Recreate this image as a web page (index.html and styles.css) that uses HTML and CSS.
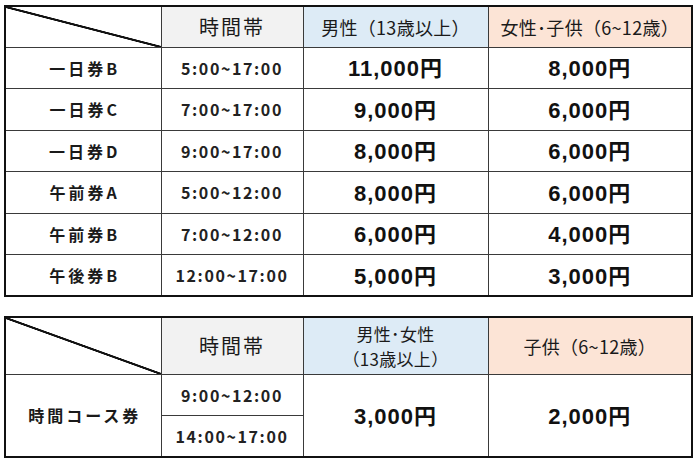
FILE: index.html
```html
<!DOCTYPE html>
<html lang="ja">
<head>
<meta charset="utf-8">
<link rel="stylesheet" href="styles.css">
</head>
<body>
<div class="page">
  <table class="price">
    <colgroup><col class="c1"><col class="c2"><col class="c3"><col class="c4"></colgroup>
    <tr class="head">
      <th class="diag"></th>
      <th class="h-time">時間帯</th>
      <th class="h-blue">男性（13歳以上）</th>
      <th class="h-peach">女性･子供（6~12歳）</th>
    </tr>
    <tr><td class="label">一日券B</td><td class="time">5:00~17:00</td><td class="yen">11,000<span class="en">円</span></td><td class="yen">8,000<span class="en">円</span></td></tr>
    <tr><td class="label">一日券C</td><td class="time">7:00~17:00</td><td class="yen">9,000<span class="en">円</span></td><td class="yen">6,000<span class="en">円</span></td></tr>
    <tr><td class="label">一日券D</td><td class="time">9:00~17:00</td><td class="yen">8,000<span class="en">円</span></td><td class="yen">6,000<span class="en">円</span></td></tr>
    <tr><td class="label">午前券A</td><td class="time">5:00~12:00</td><td class="yen">8,000<span class="en">円</span></td><td class="yen">6,000<span class="en">円</span></td></tr>
    <tr><td class="label">午前券B</td><td class="time">7:00~12:00</td><td class="yen">6,000<span class="en">円</span></td><td class="yen">4,000<span class="en">円</span></td></tr>
    <tr><td class="label">午後券B</td><td class="time">12:00~17:00</td><td class="yen">5,000<span class="en">円</span></td><td class="yen">3,000<span class="en">円</span></td></tr>
  </table>

  <table class="price second">
    <colgroup><col class="c1"><col class="c2"><col class="c3"><col class="c4"></colgroup>
    <tr class="head2">
      <th class="diag"></th>
      <th class="h-time">時間帯</th>
      <th class="h-blue two"><div class="ln">男性･女性</div><div class="ln">（13歳以上）</div></th>
      <th class="h-peach">子供（6~12歳）</th>
    </tr>
    <tr class="r2"><td class="label" rowspan="2">時間コース券</td><td class="time">9:00~12:00</td><td class="yen" rowspan="2">3,000<span class="en">円</span></td><td class="yen" rowspan="2">2,000<span class="en">円</span></td></tr>
    <tr class="r2"><td class="time">14:00~17:00</td></tr>
  </table>
</div>
</body>
</html>
```
FILE: styles.css
```css
html, body {
  margin: 0;
  padding: 0;
  background: #ffffff;
}

.page {
  padding: 5px 0 0 4px;
  display: flex;
  flex-direction: column;
  gap: 19px;
  font-family: "Noto Sans CJK JP", "Liberation Sans", sans-serif;
  color: #1a1a1a;
}

.price {
  border-collapse: collapse;
  table-layout: fixed;
  width: 687px;
  border: 2px solid #111;
}

.c1 { width: 156px; }
.c2 { width: 142px; }
.c3 { width: 185px; }
.c4 { width: 204px; }

.price th,
.price td {
  border: 1px solid #3a3a3a;
  padding: 0;
  text-align: center;
  vertical-align: middle;
  line-height: 24px;
}

.price tr { height: 41.5px; }
.price tr.head { height: 41px; }
.price tr.head2 { height: 57px; }
.price tr.r2 { height: 41.5px; }

.diag {
  background: linear-gradient(to top right, transparent calc(50% - 1.4px), #111 calc(50% - 0.8px), #111 calc(50% + 0.8px), transparent calc(50% + 1.4px));
}

.price th {
  font-weight: 400;
  font-size: 18px;
}

.h-time {
  background: #f2f2f2;
  font-size: 20px !important;
  letter-spacing: 2px;
}

.h-blue {
  background: #ddebf6;
  letter-spacing: 0.3px;
}

.h-peach {
  background: #fce4d6;
  letter-spacing: 0.3px;
}

.two {
  font-size: 17px !important;
}

.two .ln {
  line-height: 25px;
  height: 25px;
}

.label {
  font-weight: 700;
  font-size: 16px;
  letter-spacing: 3px;
  padding-left: 3px !important;
}

.time {
  font-family: "Noto Sans CJK JP", sans-serif;
  font-weight: 700;
  font-size: 16px;
  letter-spacing: 1.6px;
  color: #222;
}

.yen {
  font-family: "Liberation Sans", "Noto Sans CJK JP", sans-serif;
  font-weight: 700;
  font-size: 22px;
  letter-spacing: 1px;
  color: #111;
}

.en {
  font-family: "Noto Sans CJK JP", sans-serif;
  font-size: 22px;
}
```
